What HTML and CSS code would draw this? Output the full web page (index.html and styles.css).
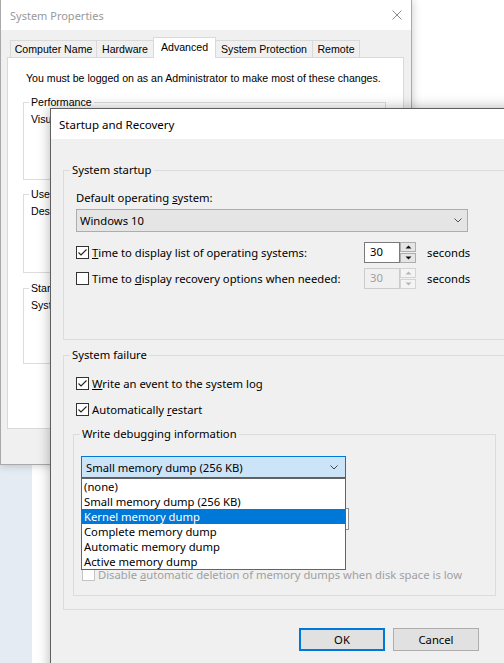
FILE: index.html
```html
<!DOCTYPE html>
<html>
<head>
<meta charset="utf-8">
<title>Startup and Recovery</title>
<link rel="stylesheet" href="styles.css">
</head>
<body>
<div class="desk">
  <div class="side"></div>

  <div class="win sysprops">
    <div class="titlebar">
      <span class="sp-title">System Properties</span>
      <svg class="close" width="10" height="10" viewBox="0 0 10 10"><path d="M0.5 0.5 L9.5 9.5 M9.5 0.5 L0.5 9.5" stroke="#8c8c8c" stroke-width="1" fill="none"/></svg>
    </div>
    <div class="sp-body">
      <div class="tabs">
        <div class="tab t-cn">Computer Name</div>
        <div class="tab t-hw">Hardware</div>
        <div class="tab sel t-adv">Advanced</div>
        <div class="tab t-sp">System Protection</div>
        <div class="tab t-rm">Remote</div>
      </div>
      <div class="panel">
        <p class="note">You must be logged on as an Administrator to make most of these changes.</p>
        <fieldset class="sp-group g-perf"><legend>Performance</legend><p>Visual effects, processor scheduling, memory usage, and virtual memory</p></fieldset>
        <fieldset class="sp-group g-user"><legend>User Profiles</legend><p>Desktop settings related to your sign-in</p></fieldset>
        <fieldset class="sp-group g-start"><legend>Startup and Recovery</legend><p>System startup, system failure, and debugging information</p></fieldset>
      </div>
    </div>
  </div>

  <div class="win dialog">
    <div class="d-titlebar">Startup and Recovery</div>
    <div class="d-body">
      <fieldset class="grp g-startup">
        <legend>System startup</legend>
        <div class="grp-in in-startup">
          <div class="lbl">Default operating <u>s</u>ystem:</div>
          <div class="combo combo-os">
            <span>Windows 10</span>
            <svg class="chev" width="8" height="5" viewBox="0 0 8 5"><path d="M0.5 0.5 L4 4 L7.5 0.5" stroke="#555" stroke-width="1" fill="none"/></svg>
          </div>
          <div class="row row-spin">
            <span class="cb checked"><svg width="11" height="11" viewBox="0 0 11 11"><path d="M1.5 5.5 L4 8 L9.5 2.5" stroke="#222" stroke-width="1.1" fill="none"/></svg></span>
            <span class="row-lbl"><u>T</u>ime to display list of operating systems:</span>
            <span class="spin">
              <span class="spin-val">30</span>
              <span class="spin-btns">
                <span class="sb"><svg width="7" height="4" viewBox="0 0 7 4"><path d="M0.5 3.5 L3.5 0.5 L6.5 3.5 Z" fill="#111"/></svg></span>
                <span class="sb"><svg width="7" height="4" viewBox="0 0 7 4"><path d="M0.5 0.5 L3.5 3.5 L6.5 0.5 Z" fill="#111"/></svg></span>
              </span>
            </span>
            <span class="unit">seconds</span>
          </div>
          <div class="row row-spin row-2">
            <span class="cb"></span>
            <span class="row-lbl">Time to <u>d</u>isplay recovery options when needed:</span>
            <span class="spin disabled">
              <span class="spin-val">30</span>
              <span class="spin-btns">
                <span class="sb"><svg width="7" height="4" viewBox="0 0 7 4"><path d="M0.5 3.5 L3.5 0.5 L6.5 3.5 Z" fill="#b5b5b5"/></svg></span>
                <span class="sb"><svg width="7" height="4" viewBox="0 0 7 4"><path d="M0.5 0.5 L3.5 3.5 L6.5 0.5 Z" fill="#b5b5b5"/></svg></span>
              </span>
            </span>
            <span class="unit">seconds</span>
          </div>
        </div>
      </fieldset>

      <fieldset class="grp g-failure">
        <legend>System failure</legend>
        <div class="grp-in in-failure">
          <div class="row row-cb">
            <span class="cb checked"><svg width="11" height="11" viewBox="0 0 11 11"><path d="M1.5 5.5 L4 8 L9.5 2.5" stroke="#222" stroke-width="1.1" fill="none"/></svg></span>
            <span><u>W</u>rite an event to the system log</span>
          </div>
          <div class="row row-cb row-restart">
            <span class="cb checked"><svg width="11" height="11" viewBox="0 0 11 11"><path d="M1.5 5.5 L4 8 L9.5 2.5" stroke="#222" stroke-width="1.1" fill="none"/></svg></span>
            <span>Automatically <u>r</u>estart</span>
          </div>
          <fieldset class="grp g-debug">
            <legend>Write debugging information</legend>
            <div class="grp-in in-debug">
              <div class="combo-wrap">
                <div class="combo combo-dump">
                  <span>Small memory dump (256 KB)</span>
                  <svg class="chev" width="8" height="5" viewBox="0 0 8 5"><path d="M0.5 0.5 L4 4 L7.5 0.5" stroke="#444" stroke-width="1" fill="none"/></svg>
                </div>
                <ul class="dropdown">
                  <li>(none)</li>
                  <li>Small memory dump (256 KB)</li>
                  <li class="hl">Kernel memory dump</li>
                  <li>Complete memory dump</li>
                  <li>Automatic memory dump</li>
                  <li>Active memory dump</li>
                </ul>
              </div>
              <div class="dir-lbl"></div>
              <div class="textbox"></div>
              <div class="row row-cb row-over">
                <span class="cb dis"></span>
              </div>
              <div class="row row-cb row-auto dis">
                <span class="cb dis"></span>
                <span>Disable <u>a</u>utomatic deletion of memory dumps when disk space is low</span>
              </div>
            </div>
          </fieldset>
        </div>
      </fieldset>

      <div class="buttons">
        <button class="btn default">OK</button>
        <button class="btn">Cancel</button>
      </div>
    </div>
  </div>
</div>
</body>
</html>
```

FILE: styles.css
```css
html, body {
  margin: 0;
  padding: 0;
}
body {
  width: 504px;
  height: 663px;
  overflow: hidden;
  background: #ffffff;
  font-family: "Noto Sans", "Open Sans", sans-serif;
  font-size: 11.25px;
  color: #000;
}
.desk {
  position: relative;
  width: 504px;
  height: 663px;
  overflow: hidden;
  background: #ffffff;
}
.side {
  position: absolute;
  left: 0;
  top: 0;
  width: 32px;
  height: 663px;
  background: #e4ebf3;
}
.win {
  position: absolute;
  box-sizing: border-box;
}
u {
  text-decoration: underline;
  text-underline-offset: 1px;
  text-decoration-thickness: 1px;
}

/* ---------- System Properties (background window) ---------- */
.sysprops {
  left: 0;
  top: 0;
  width: 412px;
  height: 465px;
  border: 1px solid #a9a9a9;
  border-top: none;
  background: #f0f0f0;
  box-shadow: 0 0 9px rgba(0, 0, 0, 0.22);
  display: flex;
  flex-direction: column;
  font-family: "Liberation Sans", Arial, sans-serif;
  font-size: 10.6px;
}
.titlebar {
  height: 30px;
  background: #fff;
  display: flex;
  align-items: center;
  justify-content: space-between;
  padding: 0 9px 0 9px;
}
.sp-title {
  font-family: "Noto Sans", sans-serif;
  font-size: 11px;
  color: #999;
}
.sp-body {
  flex: 1;
  padding: 7px 7px 0 6px;
}
.tabs {
  display: flex;
  align-items: flex-end;
  margin-left: 3px;
  height: 20px;
}
.tab {
  box-sizing: border-box;
  height: 17px;
  line-height: 16px;
  border: 1px solid #d9d9d9;
  border-bottom: none;
  margin-right: -1px;
  background: #f0f0f0;
  white-space: nowrap;
  text-align: center;
  color: #000;
}
.t-cn { width: 87px; }
.t-hw { width: 58px; }
.t-adv { width: 63px; }
.t-sp { width: 98px; }
.t-rm { width: 48px; }
.tab.sel {
  height: 21px;
  line-height: 18px;
  background: #fff;
  margin-bottom: -1px;
  position: relative;
  z-index: 1;
}
.panel {
  box-sizing: border-box;
  width: 397px;
  height: 372px;
  background: #fff;
  border: 1px solid #d9d9d9;
  padding: 12px 0 0 15px;
}
.note {
  margin: 0 0 0 3px;
  line-height: 16px;
  white-space: nowrap;
}
.sp-group {
  box-sizing: border-box;
  margin: 0;
  padding: 0 0 0 7px;
  width: 363px;
  border: 1px solid #dcdcdc;
}
.sp-group legend {
  margin-left: -2px;
  padding: 0 2px;
  line-height: 14px;
  white-space: nowrap;
}
.sp-group p {
  margin: 2px 0 0 0;
  line-height: 16px;
  white-space: nowrap;
}
.g-perf { margin-top: 9px; height: 85px; }
.g-user { margin-top: 7px; height: 86px; }
.g-start { margin-top: 8px; height: 83px; }

/* ---------- Startup and Recovery dialog ---------- */
.dialog {
  left: 50px;
  top: 108px;
  width: 470px;
  height: 570px;
  border: 1px solid #5f5f5f;
  background: #f0f0f0;
  box-shadow: 0 0 12px rgba(0, 0, 0, 0.3);
}
.d-titlebar {
  height: 30px;
  background: #fff;
  line-height: 32px;
  padding-left: 8px;
  font-size: 11.5px;
  color: #000;
}
.d-body {
  padding-left: 12px;
}
.grp {
  box-sizing: border-box;
  margin: 0;
  padding: 0;
  border: 1px solid #dcdcdc;
  min-width: 0;
}
.grp legend {
  margin-left: 6px;
  padding: 0 2px;
  line-height: 14px;
  white-space: nowrap;
}
.g-startup {
  margin-top: 24px;
  width: 455px;
}
.in-startup {
  padding: 13px 0 50px 12px;
}
.lbl {
  line-height: 16px;
  white-space: nowrap;
}
.combo {
  box-sizing: border-box;
  display: flex;
  align-items: center;
  justify-content: space-between;
  white-space: nowrap;
}
.combo-os {
  margin-top: 3px;
  width: 392px;
  height: 23px;
  background: #e5e5e5;
  border: 1px solid #adadad;
  padding: 0 5px 0 3px;
}
.row {
  display: flex;
  align-items: center;
  white-space: nowrap;
}
.row-spin {
  margin-top: 10px;
  height: 21px;
}
.row-spin.row-2 {
  margin-top: 5px;
}
.cb {
  box-sizing: border-box;
  flex: none;
  width: 13px;
  height: 13px;
  border: 1px solid #333;
  background: #fff;
  display: flex;
  align-items: center;
  justify-content: center;
  margin-right: 3px;
}
.cb.dis {
  border-color: #c4c4c4;
}
.row-lbl {
  width: 272px;
}
.spin {
  display: flex;
  height: 21px;
}
.spin-val {
  box-sizing: border-box;
  width: 36px;
  height: 21px;
  border: 1px solid #7a7a7a;
  background: #fff;
  line-height: 18px;
  padding-left: 5px;
}
.spin-btns {
  display: flex;
  flex-direction: column;
  justify-content: space-between;
  width: 16px;
  height: 21px;
}
.sb {
  box-sizing: border-box;
  height: 10px;
  border: 1px solid #adadad;
  background: #e5e5e5;
  display: flex;
  align-items: center;
  justify-content: center;
}
.spin.disabled .spin-val {
  border-color: #cccccc;
  background: #f0f0f0;
  color: #a0a0a0;
}
.spin.disabled .sb {
  border-color: #d4d4d4;
  background: #f4f4f4;
}
.unit {
  margin-left: 11px;
}

.g-failure {
  margin-top: 8px;
  width: 455px;
}
.in-failure {
  padding: 13px 0 13px 9px;
}
.row-cb {
  height: 16px;
  margin-left: 3px;
}
.row-restart {
  margin-top: 10px;
}
.g-debug {
  margin-top: 10px;
  width: 423px;
}
.in-debug {
  padding: 15px 0 13px 7px;
}
.combo-wrap {
  position: relative;
  width: 265px;
}
.combo-dump {
  width: 265px;
  height: 22px;
  background: #cce4f7;
  border: 1px solid #0078d7;
  padding: 0 7px 0 4px;
}
.dropdown {
  position: absolute;
  left: 0;
  top: 22px;
  z-index: 5;
  box-sizing: border-box;
  width: 265px;
  margin: 0;
  padding: 0;
  list-style: none;
  background: #fff;
  border: 1px solid #646464;
}
.dropdown li {
  height: 15px;
  line-height: 15px;
  padding-left: 2px;
  white-space: nowrap;
}
.dropdown li.hl {
  background: #0078d7;
  color: #fff;
}
.dir-lbl {
  margin-top: 6px;
  height: 16px;
}
.textbox {
  box-sizing: border-box;
  margin-top: 8px;
  width: 268px;
  height: 22px;
  border: 1px solid #8f8f8f;
  background: #fff;
}
.row-over {
  margin-top: 8px;
  margin-left: 1px;
}
.row-auto {
  margin-top: 12px;
  margin-left: 1px;
}
.dis {
  color: #a0a0a0;
}

.buttons {
  display: flex;
  gap: 8px;
  margin-top: 18px;
  padding-left: 236px;
}
.btn {
  box-sizing: border-box;
  width: 86px;
  height: 23px;
  margin: 0;
  padding: 0;
  font-family: "Noto Sans", "Open Sans", sans-serif;
  font-size: 11.25px;
  color: #000;
  background: #e1e1e1;
  border: 1px solid #adadad;
}
.btn.default {
  border: 2px solid #0078d7;
}
```
